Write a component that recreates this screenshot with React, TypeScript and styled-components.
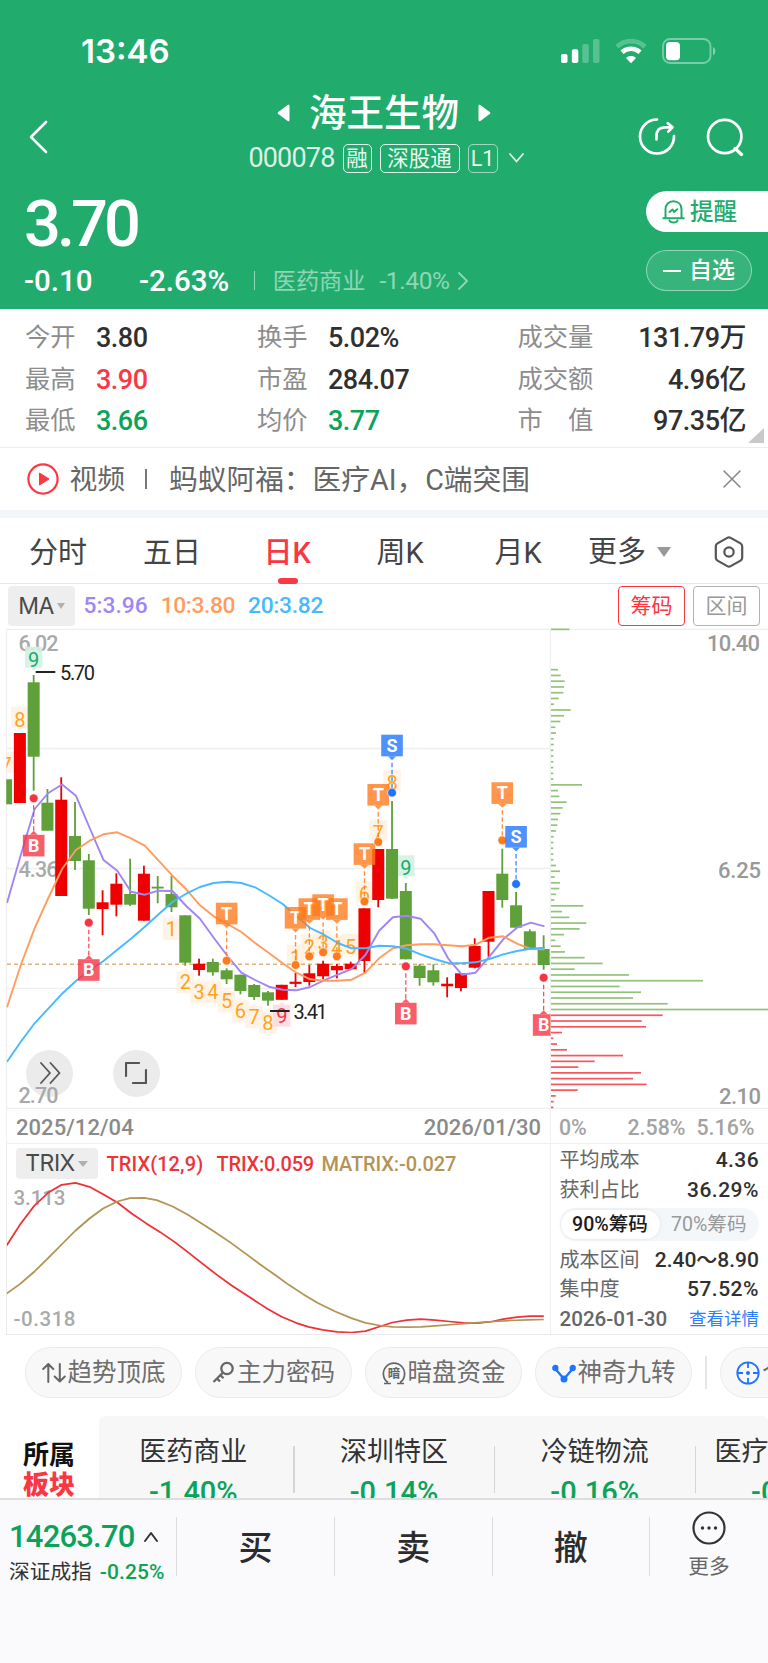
import React from "react";
import styled, { createGlobalStyle } from "styled-components";

const FONT = 'Roboto, "Noto Sans CJK SC", sans-serif';
const GREEN = "#21ac6e";
const UP = "#f93843";
const DOWN = "#0ba35a";

const Global = createGlobalStyle`
  * { box-sizing: border-box; }
  body { margin: 0; background: #fff; font-family: ${FONT}; color: #333; }
  svg { display: block; flex: none; }
`;

const Page = styled.div`
  width: 768px;
  height: 1663px;
  overflow: hidden;
  display: flex;
  flex-direction: column;
  background: #fff;
`;

const Txt = styled.span<{ $s: number; $w?: number; $c?: string; $ls?: number; $box?: number; $m?: string }>`
  font-size: ${(p) => p.$s}px;
  font-weight: ${(p) => p.$w ?? 400};
  color: ${(p) => p.$c ?? "inherit"};
  letter-spacing: ${(p) => p.$ls ?? 0}px;
  width: ${(p) => (p.$box ? `${p.$box}px` : "auto")};
  margin: ${(p) => p.$m ?? 0};
  white-space: nowrap;
`;

/* ---------- header ---------- */
const Header = styled.header`
  height: 309px;
  flex: none;
  background: ${GREEN};
  color: #fff;
`;
const StatusBar = styled.div`
  height: 88px;
  padding: 38px 51px 0 81px;
  display: flex;
  justify-content: space-between;
`;
const Clock = styled.span`
  font: 600 33px/27px Inter, sans-serif;
`;
const StatusIcons = styled.div`
  display: flex;
  gap: 15px;
`;
const NavBar = styled.div`
  height: 90px;
  display: flex;
  justify-content: space-between;
`;
const NavSide = styled.div<{ $right?: boolean }>`
  width: 160px;
  padding: ${(p) => (p.$right ? "7px 24px 0 0" : "7px 0 0 29px")};
  display: flex;
  align-items: center;
  justify-content: ${(p) => (p.$right ? "flex-end" : "flex-start")};
  gap: 30px;
`;
const TitleBlock = styled.div`
  display: flex;
  flex-direction: column;
  align-items: center;
`;
const TitleRow = styled.div`
  margin-top: 5px;
  height: 40px;
  display: flex;
  align-items: center;
  gap: 19px;
  font-size: 37.5px;
  font-weight: 500;
  line-height: 40px;
`;
const CodeRow = styled.div`
  margin: 10.5px 0 0 5px;
  height: 29px;
  display: flex;
  align-items: center;
  gap: 8px;
  line-height: 31px;
`;
const Tag = styled.span<{ $dim?: boolean; $w: number }>`
  width: ${(p) => p.$w}px;
  height: 29px;
  border: 1.5px solid rgba(255, 255, 255, ${(p) => (p.$dim ? 0.55 : 0.85)});
  border-radius: 5px;
  font-size: 21.5px;
  line-height: 28px;
  text-align: center;
  color: rgba(255, 255, 255, 0.92);
`;
const QuoteRow = styled.div`
  display: flex;
  justify-content: space-between;
`;
const QuoteLeft = styled.div`
  padding: 16px 0 0 24px;
`;
const BigPrice = styled.div`
  font-size: 65px;
  font-weight: 500;
  line-height: 60px;
  letter-spacing: -4px;
`;
const ChangeRow = styled.div`
  margin-top: 11.5px;
  height: 30px;
  display: flex;
  align-items: center;
  line-height: 30px;
`;
const HeadDivider = styled.i`
  width: 1.5px;
  height: 19px;
  margin: 0 17.5px 0 24.5px;
  background: rgba(255, 255, 255, 0.5);
`;
const QuoteActions = styled.div`
  width: 122px;
  padding-top: 13px;
  display: flex;
  flex-direction: column;
  gap: 18px;
`;
const Remind = styled.button`
  height: 41px;
  border: 0;
  padding: 1px 0 0 16px;
  border-radius: 21px 0 0 21px;
  background: #fff;
  color: ${GREEN};
  display: flex;
  align-items: center;
  gap: 5px;
  font: 500 23.5px/41px ${FONT};
`;
const Favorite = styled.button`
  width: 106px;
  height: 41px;
  padding: 1px 0 0 16px;
  border: 1.5px solid rgba(255, 255, 255, 0.45);
  border-radius: 21px;
  background: rgba(255, 255, 255, 0.1);
  color: #fff;
  display: flex;
  align-items: center;
  gap: 8px;
  font: 500 23px/38px ${FONT};
  &::before {
    content: "";
    width: 18px;
    height: 2px;
    background: #fff;
  }
`;

/* ---------- stats ---------- */
const Stats = styled.section`
  position: relative;
  height: 139px;
  flex: none;
  padding: 9px 22px 0 25px;
  border-bottom: 1.5px solid #ececec;
  display: grid;
  grid-template-columns: 232px 260.5px 1fr;
  grid-auto-rows: 41.4px;
`;
const Stat = styled.div`
  display: flex;
  align-items: center;
  line-height: 41px;
  &:nth-child(3n) {
    justify-content: space-between;
  }
`;
const StatLabel = styled.span`
  width: 71px;
  margin-bottom: 2px;
  font-size: 25.3px;
  color: #8d8d8d;
  white-space: pre;
`;
const Fold = styled.i`
  position: absolute;
  right: 4px;
  bottom: 4px;
  border-left: 16px solid transparent;
  border-bottom: 15px solid #c9c9c9;
`;

/* ---------- news + tabs ---------- */
const News = styled.section`
  height: 62px;
  flex: none;
  padding: 0 26px 0 27px;
  display: flex;
  align-items: center;
  color: #666;
  font-size: 28.7px;
  line-height: 62px;
  white-space: pre;
`;
const NewsKind = styled.span`
  margin: 2px 0 0 10.5px;
  font-size: 27.8px;
`;
const NewsBar = styled.i`
  width: 2px;
  height: 20px;
  margin: 0 22px 0 20px;
  background: #777;
`;
const NewsTitle = styled.span`
  flex: 1;
  margin-top: 2px;
`;
const Tabs = styled.nav`
  height: 74px;
  flex: none;
  border-top: 8px solid #f2f5f9;
  border-bottom: 1.5px solid #e6e6e6;
  padding: 0 24px 0 29px;
  display: grid;
  grid-template-columns: 114px 120.5px 113px 118px 93.5px 1fr auto;
  align-items: center;
  font-size: 29px;
  line-height: 68px;
  color: #444;
`;
const Tab = styled.div<{ $on?: boolean }>`
  height: 66px;
  display: flex;
  flex-direction: column;
  align-items: flex-start;
  color: ${(p) => (p.$on ? UP : "#444")};
  font-weight: ${(p) => (p.$on ? 500 : 400)};
  &::after {
    content: "";
    width: 20px;
    height: 6px;
    margin: -9px 0 0 14px;
    border-radius: 3px;
    background: ${(p) => (p.$on ? UP : "transparent")};
  }
`;
const MoreTab = styled.div`
  display: flex;
  align-items: center;
  gap: 11px;
`;
const Caret = styled.i<{ $w: number; $h: number; $c?: string }>`
  border: ${(p) => p.$w / 2}px solid transparent;
  border-bottom: 0;
  border-top: ${(p) => p.$h}px solid ${(p) => p.$c ?? "#b0b0b0"};
`;
const MaRow = styled.div`
  height: 44px;
  flex: none;
  padding: 2px 8px;
  display: flex;
  align-items: center;
  line-height: 42px;
`;
const IndexButton = styled.button<{ $w: number; $h: number }>`
  width: ${(p) => p.$w}px;
  height: ${(p) => p.$h}px;
  border: 0;
  padding: 0;
  border-radius: 4px;
  background: #eee;
  color: #4a4a4a;
  font: 400 23px/${(p) => p.$h}px Inter, sans-serif;
  display: flex;
  align-items: center;
  justify-content: center;
  gap: 3px;
  letter-spacing: -0.5px;
`;
const MaValues = styled.div`
  flex: 1;
  padding-left: 8.5px;
  display: flex;
  gap: 13px;
`;
const Outline = styled.button<{ $c: string; $t: string }>`
  width: 67px;
  height: 40px;
  margin-left: 8px;
  padding: 0;
  border: 1.5px solid ${(p) => p.$c};
  border-radius: 4px;
  background: #fff;
  color: ${(p) => p.$t};
  font: 400 21px/38px ${FONT};
`;

/* ---------- chart ---------- */
const ChartGrid = styled.section`
  position: relative;
  flex: none;
  height: 481px;
  display: grid;
  grid-template-columns: 551px 217px;
  & > svg {
    position: relative;
    z-index: 1;
    pointer-events: none;
  }
`;
const RoundButton = styled.button<{ $x: number }>`
  position: absolute;
  left: ${(p) => p.$x}px;
  bottom: 12.5px;
  width: 47px;
  height: 47px;
  border: 0;
  padding: 0;
  border-radius: 50%;
  background: #ebebeb;
  display: flex;
  align-items: center;
  justify-content: center;
`;
const AxisRow = styled.div`
  flex: none;
  height: 35px;
  display: grid;
  grid-template-columns: 544px 1fr;
  margin-left: 6px;
  border: 1.5px solid #efefef;
  border-width: 0 0 1.5px 1.5px;
  line-height: 37px;
`;
const AxisCell = styled.div<{ $share?: boolean }>`
  display: flex;
  justify-content: ${(p) => (p.$share ? "flex-start" : "space-between")};
  padding: 0 9px 0 ${(p) => (p.$share ? 8 : 9)}px;
  border-right: ${(p) => (p.$share ? 0 : 1.5)}px solid #efefef;
  color: ${(p) => (p.$share ? "#a3a3a3" : "#8a8a8a")};
`;
const SubRow = styled.section`
  flex: none;
  height: 191px;
  margin-left: 6px;
  border: 1.5px solid #e9e9e9;
  border-width: 0 0 1.5px 1.5px;
  display: grid;
  grid-template-columns: 544px 1fr;
`;
const TrixPanel = styled.div`
  border-right: 1.5px solid #efefef;
  padding-top: 4px;
`;
const TrixHead = styled.div`
  height: 31px;
  padding-left: 8.5px;
  display: flex;
  align-items: center;
  line-height: 31px;
`;
const TrixValues = styled.div`
  display: flex;
  padding: 2px 0 0 9px;
`;
const ChipPanel = styled.div`
  padding: 0 9px 0 8.5px;
  color: #666;
`;
const ChipLine = styled.div<{ $h: number }>`
  height: ${(p) => p.$h}px;
  line-height: ${(p) => p.$h}px;
  display: flex;
  justify-content: space-between;
  font-size: 20px;
`;
const Toggle = styled.div`
  height: 33px;
  margin: 4px 0 5px;
  padding: 2px 1px;
  border-radius: 17px;
  background: #f3f7fa;
  display: grid;
  grid-template-columns: 99px 1fr;
  text-align: center;
  font-size: 19.6px;
  line-height: 29px;
  color: #999;
`;
const Thumb = styled.span`
  border-radius: 15px;
  background: #fff;
  box-shadow: 0 0 4px rgba(0, 0, 0, 0.08);
  color: #1c1c1c;
  font-weight: 500;
`;

/* ---------- tools ---------- */
const Tools = styled.section`
  flex: none;
  height: 81px;
  padding: 12px 0 0 25px;
  display: flex;
  gap: 13px;
  overflow: hidden;
`;
const Tool = styled.button`
  flex: none;
  width: 157px;
  height: 51px;
  padding: 0;
  border: 1.5px solid #ebebeb;
  border-radius: 26px;
  background: #f8f8f8;
  color: #6e6e6e;
  font: 400 24.5px/48px ${FONT};
  display: flex;
  align-items: center;
  justify-content: center;
  gap: 2px;
  white-space: nowrap;
`;
const ToolDivider = styled.i`
  flex: none;
  width: 1.5px;
  height: 33px;
  margin: 9px 0 0 0;
  background: #e6e6e6;
`;

/* ---------- sectors ---------- */
const Sectors = styled.section`
  flex: none;
  height: 82px;
  display: flex;
  overflow: hidden;
`;
const SectorTitle = styled.div`
  width: 99px;
  padding: 23.5px 0 0 23px;
  font-size: 26px;
  font-weight: 700;
  line-height: 30.7px;
  color: #111;
  b {
    display: block;
    color: ${UP};
  }
`;
const SectorList = styled.div`
  flex: none;
  width: 669px;
  overflow: hidden;
  display: flex;
  background: #f7f7f7;
  border-radius: 6px 6px 0 0;
`;
const Sector = styled.div`
  flex: none;
  width: 200.7px;
  position: relative;
  padding-top: 20px;
  display: flex;
  flex-direction: column;
  align-items: center;
  line-height: 32px;
  &:first-child {
    margin-left: -6px;
  }
  &:not(:last-child)::after {
    content: "";
    position: absolute;
    right: -1px;
    top: 30px;
    width: 1.5px;
    height: 47px;
    background: #d5d5d5;
  }
`;
const SectorPct = styled.span`
  margin-top: 7px;
  font-size: 29px;
  font-weight: 500;
  line-height: 34px;
  color: ${DOWN};
`;

/* ---------- bottom bar ---------- */
const BottomBar = styled.footer`
  flex: 1;
  border-top: 2px solid #dedee0;
  background: #fafafc;
  display: grid;
  grid-template-columns: 176px 158px 157.5px 157.5px 1fr;
`;
const IndexCell = styled.div`
  padding: 18px 0 0 9px;
`;
const IndexLine = styled.div<{ $h: number }>`
  height: ${(p) => p.$h}px;
  line-height: ${(p) => p.$h}px;
  display: flex;
  align-items: center;
  gap: 8px;
`;
const Trade = styled.div`
  height: 59px;
  margin-top: 17px;
  border-left: 1.5px solid #dcdcde;
  text-align: center;
  font-size: 34px;
  font-weight: 500;
  line-height: 63px;
  color: #2c2c2c;
`;
const MoreCell = styled.div`
  height: 59px;
  margin-top: 17px;
  border-left: 1.5px solid #dcdcde;
  display: flex;
  flex-direction: column;
  align-items: center;
  font-size: 20.7px;
  line-height: 32px;
  color: #666;
  svg {
    margin-top: -6px;
    margin-bottom: 6px;
  }
`;

/* ---------- chart data ---------- */
const cx = (i: number) => 6.1 + 13.783 * i;
const RED = "#ee0000";
const GRN = "#5fa03a";

// [up, bodyTop, bodyBottom, wickTop, wickBottom]
const CANDLES: [number, number, number, number, number][] = [
  [0, 779.3, 804.3, 779.3, 804.3], [1, 733, 803, 733, 803], [0, 682.3, 756.7, 675, 790.7],
  [0, 802.7, 830.7, 789, 830.7], [1, 799.7, 896, 777.3, 896], [0, 836, 861, 802, 870],
  [0, 860.3, 908.7, 854, 915], [1, 902.3, 909, 890.3, 935.3], [1, 883.7, 904.7, 873.3, 916.3],
  [0, 894, 904.7, 858.7, 906], [1, 873.7, 920.7, 865.7, 920.7], [0, 886.7, 888.5, 876, 903.3],
  [0, 894, 907.3, 875.7, 912], [0, 915.3, 962.7, 915.3, 965.7], [1, 963.7, 970, 958.7, 975.7],
  [0, 962, 972.3, 958.7, 975.7], [0, 970.3, 979.3, 968.3, 984], [0, 974.7, 991, 974.7, 994.3],
  [0, 985, 997, 984, 1000], [0, 992.3, 1000.7, 991, 1005.7], [1, 984.8, 999.8, 984.8, 999.8],
  [1, 981.7, 983.9, 973, 987], [1, 973.3, 982, 965, 985.7], [1, 963.7, 976.3, 960.7, 979.3],
  [1, 966, 970.3, 964, 978.3], [1, 963.7, 969.3, 961.7, 970], [1, 908.3, 961, 908.3, 973.3],
  [1, 849, 900, 849, 907.3], [0, 849, 898.7, 801, 899], [0, 891, 959.3, 883, 959.3],
  [0, 965.7, 978, 964, 985.7], [0, 970.3, 982.3, 964.3, 985.7], [1, 983.7, 986.3, 977.3, 997.3],
  [1, 973.3, 988, 973.3, 991.3], [1, 946, 967.7, 938.3, 968.3], [1, 891, 941.7, 891, 956.7],
  [0, 873.7, 900, 848.7, 907.7], [0, 905.3, 927.7, 892, 927.7], [0, 931.3, 949.3, 929.3, 949.3],
  [0, 949, 965, 935.3, 969.7],
];
const MA5 = [903, 855, 809, 793, 784.5, 795.7, 828, 860, 870.7, 891.7, 894.7, 890.7, 891, 906, 918.7, 937.7, 956, 972.7, 980, 986.7, 989.7, 990.3, 987, 980.3, 974.7, 969, 955, 930.7, 917.3, 915.7, 918.7, 933.3, 958.3, 974.7, 972.7, 956.7, 939.3, 927.7, 922.7, 926.3];
const MA10 = [1007.3, 965, 928.3, 898, 869, 850, 840.7, 834.3, 832.3, 838.3, 845.7, 860.7, 875.7, 889.3, 905.3, 916.3, 924, 932, 943, 953, 963.3, 972.7, 979.3, 980.7, 980.7, 979.7, 972.7, 958.3, 948.3, 945.3, 944.3, 944.3, 945.3, 946.3, 944.7, 937.7, 936.3, 943.7, 949, 949.3];
const MA20 = [1061.7, 1041.7, 1023.3, 1008.7, 993.7, 981, 970.3, 961, 949.7, 938.7, 926.7, 914.3, 902, 893.7, 887, 883, 881.7, 883, 887.3, 895.3, 904, 916, 928, 934.7, 943, 948.3, 948.3, 945.7, 946.3, 948.7, 954.3, 959, 963, 963.3, 962.3, 959, 954.3, 951, 948.7, 947.7];
const line = (a: number[]) => a.map((y, i) => `${(cx(i) + 0.9).toFixed(1)},${y}`).join(" ");

// [index, digit, centre y, below]
const COUNTS: [number, string, number, number][] = [
  [0, "7", 764.7, 0], [1, "8", 719.7, 0], [2, "9", 659.7, 0],
  [12, "1", 929.3, 1], [13, "2", 982.3, 1], [14, "3", 992.3, 1], [15, "4", 992.3, 1],
  [16, "5", 1001.3, 1], [17, "6", 1011.3, 1], [18, "7", 1017, 1], [19, "8", 1022.7, 1], [20, "9", 1015.7, 1],
  [21, "1", 957.7, 0], [22, "2", 947.3, 0], [23, "3", 943.3, 0], [24, "4", 948.3, 0], [25, "5", 946.7, 0],
  [26, "6", 894.3, 0], [27, "7", 833.3, 0], [28, "8", 783.3, 0], [29, "9", 868.3, 0],
];
// [index, kind, dot y]
const SIGNALS: [number, "B" | "S" | "T", number][] = [
  [2, "B", 798.3], [6, "B", 922.7], [29, "B", 966.3], [39, "B", 977.7],
  [16, "T", 960.7], [21, "T", 965], [22, "T", 956.3], [24, "T", 956.3], [23, "T", 952.3],
  [26, "T", 901.3], [27, "T", 842], [36, "T", 840.3], [28, "S", 792.7], [37, "S", 884],
];
const SIG = { B: "#f73341", S: "#1f74ff", T: "#ff7a1c" };

const PROFILE = [
  88, 0, 0, 0, 0, 0, 0, 54, 62, 74, 72, 70, 56, 42, 92, 72, 61, 46, 48, 41, 41, 40, 40, 40, 40, 40, 40, 126, 54, 58,
  80, 68, 61, 54, 52, 48, 41, 40, 40, 40, 40, 48, 60, 44, 60, 58, 48, 43, 130, 66, 88, 139, 119, 72, 46, 62, 75, 134,
  188, 104, 267, 489, 239, 303, 279, 383, 690, 368, 305, 318, 66, 40, 51, 81, 249, 164, 115, 303, 279, 320, 113, 47, 41, 40,
];

const TRIX_LINE = "20,408 57,346 98,288 136,250 174,226 213,220 252,232 290,254 330,279 370,312 410,341 450,368 490,397 530,430 570,464 610,497 650,528 690,556 730,584 750,598 790,622 830,640 865,652 905,661 945,667 985,669 1025,665 1065,651 1100,639 1140,632 1180,629 1220,632 1260,636 1300,640 1340,641 1380,636 1410,629 1450,623 1485,620 1524,620";
const MATRIX_LINE = "20,552 57,524 98,486 136,446 174,405 213,363 252,327 290,297 330,276 365,266 405,265 440,272 485,291 525,314 565,341 605,369 645,398 690,433 730,465 770,495 810,526 850,554 890,580 940,606 985,626 1025,640 1065,648 1100,652 1140,653 1180,652 1220,649 1270,645 1320,641 1380,636 1430,633 1480,631 1524,630";

function Count({ d }: { d: [number, string, number, number] }) {
  const [i, n, y, below] = d;
  const x = cx(i);
  const nine = n === "9";
  const bg = nine ? (below ? "#fcdcdf" : "#d5f1e4") : "#fff2e4";
  const fg = nine ? (below ? "#f5364a" : "#14ad68") : "#ffa31f";
  const top = below ? y - 11 : y - 13;
  const tip = below ? `${x - 3},${top} ${x},${top - 3} ${x + 3},${top}` : `${x - 3},${top + 21} ${x},${top + 24} ${x + 3},${top + 21}`;
  return (
    <g>
      <g fill={bg} opacity={0.9}>
        <rect x={x - 8.7} y={top} width={17.4} height={below ? 22 : 21} />
        <polygon points={tip} />
      </g>
      <text x={x} y={y + 7.1} textAnchor="middle" fontSize={20} fill={fg}>{n}</text>
    </g>
  );
}

function Signal({ d }: { d: [number, "B" | "S" | "T", number] }) {
  const [i, k, y] = d;
  const x = cx(i);
  const c = SIG[k];
  const low = k === "B";
  const top = low ? y + 36.5 : y - 58;
  const tip = low ? `${x - 4},${top} ${x},${top - 4} ${x + 4},${top}` : `${x - 4},${top + 21.6} ${x},${top + 25.5} ${x + 4},${top + 21.6}`;
  return (
    <g>
      <line x1={x} x2={x} y1={low ? y + 7 : top + 28} y2={low ? top - 4 : y - 4} stroke={c} strokeWidth={1.3} strokeDasharray="4.5 2.5" opacity={0.85} />
      <circle cx={x} cy={y} r={4.4} fill={c} stroke="#fff" strokeWidth={0.6} />
      <g fill={c} opacity={0.79}>
        <rect x={x - 10.8} y={top} width={21.6} height={21.6} />
        <polygon points={tip} />
      </g>
      <text x={x} y={top + 17} textAnchor="middle" fontSize={18} fontWeight={700} fill="#fff" fontFamily="Roboto">{k}</text>
    </g>
  );
}

function CandleChart() {
  return (
    <svg width={551} height={481} viewBox="0 628 551 481" fontFamily="Roboto">
      <g stroke="#efefef" strokeWidth={1.3}>
        {[629.3, 748.5, 868.5, 988.4, 1108.4].map((y) => <line key={y} x1={6} x2={551} y1={y} y2={y} />)}
        <line x1={6.5} x2={6.5} y1={629} y2={1109} />
        <line x1={550.4} x2={550.4} y1={629} y2={1109} />
      </g>
      <g fill="#a9a9a9" fontSize={21.5} fontWeight={500}>
        <text x={18.5} y={650.8} textLength={40}>6.02</text>
        <text x={18.5} y={876.8} textLength={40}>4.36</text>
        <text x={18.5} y={1103.3} textLength={40}>2.70</text>
      </g>
      <clipPath id="plot"><rect x={6.5} y={628} width={544} height={481} /></clipPath>
      <g clipPath="url(#plot)">
        {COUNTS.map((d, k) => <Count key={k} d={d} />)}
        <line x1={7} x2={550} y1={964.2} y2={964.2} stroke="#d9b380" strokeWidth={1.6} strokeDasharray="4 3" />
        {CANDLES.map(([up, t, b, wt, wb], i) => (
          <g key={i} fill={up ? RED : GRN}>
            <rect x={cx(i) - 6} y={t} width={12} height={b - t} />
            <rect x={cx(i) - 0.9} y={wt} width={1.8} height={wb - wt} />
          </g>
        ))}
        <g fill="none" strokeWidth={1.9} strokeLinejoin="round">
          <polyline points={line(MA5)} stroke="#a085f5" />
          <polyline points={line(MA10)} stroke="#ff9c5e" />
          <polyline points={line(MA20)} stroke="#47b9ff" />
        </g>
        {SIGNALS.map((d, k) => <Signal key={k} d={d} />)}
      </g>
      <g fill="#222" fontSize={20}>
        <rect x={35.7} y={671} width={19.6} height={2} />
        <text x={60} y={679.8} textLength={35}>5.70</text>
        <rect x={270} y={1010} width={19.6} height={2} />
        <text x={293.5} y={1019.2} textLength={34}>3.41</text>
      </g>
    </svg>
  );
}

function ProfileChart() {
  return (
    <svg width={217} height={481} viewBox="551 628 217 481" fontFamily="Roboto">
      <line x1={551} x2={768} y1={629.3} y2={629.3} stroke="#efefef" strokeWidth={1.3} />
      <line x1={551} x2={768} y1={1108.4} y2={1108.4} stroke="#efefef" strokeWidth={1.3} />
      {PROFILE.map((v, n) =>
        v ? <rect key={n} x={551} y={628.5 + n * 5.76} width={(v - 33) / 3} height={1.7} fill={n > 66 ? "#f9555c" : "#93c27a"} /> : null
      )}
      <g fill="#999" fontSize={22} fontWeight={500}>
        <text x={707} y={651.2} textLength={53}>10.40</text>
        <text x={718} y={877.6} textLength={43}>6.25</text>
        <text x={719} y={1104} textLength={42}>2.10</text>
      </g>
    </svg>
  );
}

function TrixChart() {
  return (
    <svg width={542} height={154} viewBox="7.5 1179.5 542 154" fontFamily="Roboto">
      <g fill="#a9a9a9" fontSize={20.5} fontWeight={500}>
        <text x={14} y={1205.3} textLength={52}>3.113</text>
        <text x={14} y={1326.5} textLength={62}>-0.318</text>
      </g>
      <g transform="translate(0 1110) scale(0.35714 0.33333)" fill="none" strokeWidth={5.2} strokeLinejoin="round">
        <polyline points={TRIX_LINE} stroke="#ee3338" />
        <polyline points={MATRIX_LINE} stroke="#b39456" />
      </g>
    </svg>
  );
}

/* ---------- icons ---------- */
const SignalIcon = () => (
  <svg width={39} height={27} viewBox="0 0 39 27" fill="#fff">
    <rect x={0} y={16} width={6.5} height={9} rx={1.8} />
    <rect x={10.8} y={11.3} width={6.5} height={13.7} rx={1.8} />
    <rect x={21.3} y={6} width={6.5} height={19} rx={1.8} opacity={0.25} />
    <rect x={32} y={1} width={6.5} height={24} rx={1.8} opacity={0.25} />
  </svg>
);
const WifiIcon = () => (
  <svg width={32} height={27} viewBox="0 0 32 27" fill="none">
    <path d="M2 8.700C10 1.200 22 1.200 30 8.700" stroke="#fff" strokeWidth={4.6} opacity={0.25} />
    <path d="M7 14.200C12.200 9.500 19.800 9.500 25 14.200" stroke="#fff" strokeWidth={4.6} />
    <path d="M16 25.300l-5-5.400c2.800-2.600 7.200-2.600 10 0z" fill="#fff" />
  </svg>
);
const BatteryIcon = () => (
  <svg width={55} height={27} viewBox="0 0 55 27" fill="none">
    <rect x={1} y={1} width={47.5} height={24} rx={7} stroke="#fff" strokeWidth={1.8} opacity={0.4} />
    <rect x={4} y={4} width={14} height={18.3} rx={4} fill="#fff" />
    <path d="M51 9c3 1.200 3 7 0 8.200z" fill="#fff" opacity={0.45} />
  </svg>
);
const BackIcon = () => (
  <svg width={19} height={34} viewBox="0 0 19 34" fill="none" stroke="#fff" strokeWidth={2.6} strokeLinecap="round" strokeLinejoin="round">
    <path d="M17 2L2 17l15 15" />
  </svg>
);
const ShareIcon = () => (
  <svg width={38} height={38} viewBox="0 0 38 38" fill="none" stroke="#fff" strokeWidth={2.7} strokeLinecap="round" strokeLinejoin="round">
    <path d="M19 1.500A17 17 0 1 0 36 18" />
    <path d="M18.500 21.500V18C18.500 12 22 9.300 27 9.300H34M29.800 5.200l4.700 4-4.300 4.400" />
  </svg>
);
const SearchIcon = () => (
  <svg width={38} height={38} viewBox="0 0 38 38" fill="none" stroke="#fff" strokeWidth={2.7} strokeLinecap="round">
    <circle cx={18.7} cy={18.5} r={16.7} />
    <path d="M29 30.500l6.500 6" strokeWidth={3.2} />
  </svg>
);
const TitleArrow = styled.svg<{ $flip?: boolean }>`
  transform: ${(p) => (p.$flip ? "scaleX(-1)" : "none")};
`;
const Arrow = ({ flip }: { flip?: boolean }) => (
  <TitleArrow $flip={flip} width={13} height={18} viewBox="0 0 13 18" fill="#fff">
    <path d="M11 .8Q12.500 .2 12.500 2V16q0 1.800-1.500 1.200L1 9.800Q0 9 1 8.200z" />
  </TitleArrow>
);
const Bell = () => (
  <svg width={23} height={24} viewBox="0 0 23 24" fill="none" stroke={GREEN} strokeWidth={2} strokeLinecap="round" strokeLinejoin="round">
    <path d="M3.500 18V9.500C3.500 4.500 6.800 1.300 11.500 1.300s8 3.200 8 8.200V18M1.300 18.300h20.400M7.500 20.500c1 2.800 7 2.800 8 0M7.500 12l3-2.500 1.600 2.500 3.200-2.800" />
  </svg>
);
const PlayIcon = () => (
  <svg width={32} height={32} viewBox="0 0 32 32">
    <circle cx={16} cy={16} r={14.6} fill="none" stroke={UP} strokeWidth={2.2} />
    <path d="M12.500 10v12l9.500-6z" fill={UP} stroke={UP} strokeLinejoin="round" />
  </svg>
);
const Chevron = ({ d, w, h, c, s = 1.8 }: { d: string; w: number; h: number; c: string; s?: number }) => (
  <svg width={w} height={h} viewBox={`0 0 ${w} ${h}`} fill="none" stroke={c} strokeWidth={s} strokeLinecap="round" strokeLinejoin="round">
    <path d={d} />
  </svg>
);
const HexIcon = () => (
  <svg width={30} height={32} viewBox="0 0 30 32" fill="none" stroke="#555" strokeWidth={2.2} strokeLinejoin="round">
    <path d="M13.300 1.900q1.700-.9 3.400 0l9.800 5.500q1.700 1 1.700 2.900v11.400q0 1.900-1.700 2.900l-9.800 5.500q-1.700.9-3.400 0l-9.800-5.500q-1.700-1-1.700-2.900V10.300q0-1.900 1.700-2.900z" />
    <circle cx={15} cy={16} r={4.7} />
  </svg>
);
const TrendArrows = () => (
  <svg width={24} height={22} viewBox="0 0 24 22" fill="none" stroke="#666" strokeWidth={2} strokeLinecap="round" strokeLinejoin="round">
    <path d="M6.300 20V2M1.200 7l5.100-5L11.300 7M17.800 2v17.500M12.700 14.500l5.100 5 5-5" />
  </svg>
);
const KeyIcon = () => (
  <svg width={23} height={23} viewBox="0 0 23 23" fill="none" stroke="#666" strokeWidth={2.3}>
    <circle cx={15} cy={7.5} r={5.7} />
    <path d="M11 11.500L1.500 21M4.500 17l3.500 3.500M8 13.800l3.500 3.500" />
  </svg>
);
const DarkIcon = () => (
  <svg width={24} height={24} viewBox="0 0 24 24" fill="none" stroke="#666" strokeWidth={1.7}>
    <path d="M6 21.500A10.600 10.600 0 1 1 18 21.500M2 22.500h7M15 22.500h7" />
    <text x={12} y={16.5} textAnchor="middle" fontSize={12.5} fontWeight={700} fill="#666" stroke="none" fontFamily="Noto Sans CJK SC">暗</text>
  </svg>
);
const NineIcon = () => (
  <svg width={24} height={20} viewBox="0 0 24 20" fill="#1f74ff" stroke="#1f74ff" strokeWidth={2.4}>
    <path d="M3.500 6l8.500 10 8.500-10" fill="none" />
    <circle cx={3.3} cy={5} r={2} /><circle cx={20.7} cy={5} r={2} /><circle cx={12} cy={16} r={2.3} />
  </svg>
);
const TargetIcon = () => (
  <svg width={24} height={24} viewBox="0 0 24 24" fill="none" stroke="#1f74ff" strokeWidth={1.8}>
    <circle cx={12} cy={12} r={10.7} />
    <path d="M12 1v6M12 17v6M1 12h6M17 12h6" />
    <circle cx={12} cy={12} r={2} fill="#1f74ff" stroke="none" />
  </svg>
);

const STATS: [string, string, string?][] = [
  ["今开", "3.80"], ["换手", "5.02%"], ["成交量", "131.79万"],
  ["最高", "3.90", UP], ["市盈", "284.07"], ["成交额", "4.96亿"],
  ["最低", "3.66", DOWN], ["均价", "3.77", DOWN], ["市\u3000值", "97.35亿"],
];
const SECTORS = [["医药商业", "-1.40%"], ["深圳特区", "-0.14%"], ["冷链物流", "-0.16%"], ["医疗器械概念", "-0.62%"]];

export default function App() {
  return (
    <Page>
      <Global />
      <Header>
        <StatusBar>
          <Clock>13:46</Clock>
          <StatusIcons><SignalIcon /><WifiIcon /><BatteryIcon /></StatusIcons>
        </StatusBar>
        <NavBar>
          <NavSide><BackIcon /></NavSide>
          <TitleBlock>
            <TitleRow><Arrow /><span>海王生物</span><Arrow flip /></TitleRow>
            <CodeRow>
              <Txt $s={27} $ls={-0.8} $c="rgba(255,255,255,.85)">000078</Txt>
              <Tag $w={29}>融</Tag><Tag $w={80}>深股通</Tag><Tag $w={30} $dim>L1</Tag>
              <Chevron w={19} h={12} d="M4 2l6.500 7.500L17 2" c="rgba(255,255,255,.85)" />
            </CodeRow>
          </TitleBlock>
          <NavSide $right><ShareIcon /><SearchIcon /></NavSide>
        </NavBar>
        <QuoteRow>
          <QuoteLeft>
            <BigPrice>3.70</BigPrice>
            <ChangeRow>
              <Txt $s={29.5} $w={500} $box={115}>-0.10</Txt>
              <Txt $s={29.5} $w={500}>-2.63%</Txt>
              <HeadDivider />
              <Txt $s={23.2} $c="rgba(255,255,255,.5)">医药商业</Txt>
              <Txt $s={24.5} $ls={-0.4} $c="rgba(255,255,255,.5)" $m="0 7px 0 14px">-1.40%</Txt>
              <Chevron w={12} h={20} d="M2 2l8 8-8 8" c="rgba(255,255,255,.5)" />
            </ChangeRow>
          </QuoteLeft>
          <QuoteActions>
            <Remind><Bell />提醒</Remind>
            <Favorite>自选</Favorite>
          </QuoteActions>
        </QuoteRow>
      </Header>

      <Stats>
        {STATS.map(([l, v, c]) => (
          <Stat key={l}>
            <StatLabel>{l}</StatLabel>
            <Txt $s={27} $w={500} $ls={-0.5} $c={c ?? "#303030"}>{v}</Txt>
          </Stat>
        ))}
        <Fold />
      </Stats>

      <News>
        <PlayIcon />
        <NewsKind>视频</NewsKind>
        <NewsBar />
        <NewsTitle>蚂蚁阿福：医疗AI，C端突围</NewsTitle>
        <Chevron w={20} h={20} d="M2 2l16 16M18 2L2 18" c="#888" s={1.6} />
      </News>

      <Tabs>
        <Tab>分时</Tab>
        <Tab>五日</Tab>
        <Tab $on>日K</Tab>
        <Tab>周K</Tab>
        <Tab>月K</Tab>
        <MoreTab>更多<Caret $w={14} $h={10} $c="#999" /></MoreTab>
        <HexIcon />
      </Tabs>

      <MaRow>
        <IndexButton $w={67} $h={40}>MA<Caret $w={9} $h={6} /></IndexButton>
        <MaValues>
          <Txt $s={22.8} $w={500} $c="#a085f5">5:3.96</Txt>
          <Txt $s={22.8} $w={500} $c="#ff9c5e" $ls={-0.4}>10:3.80</Txt>
          <Txt $s={22.8} $w={500} $c="#47b9ff" $ls={-0.3}>20:3.82</Txt>
        </MaValues>
        <Outline $c={UP} $t={UP}>筹码</Outline>
        <Outline $c="#b3b3b3" $t="#999">区间</Outline>
      </MaRow>

      <ChartGrid>
        <CandleChart />
        <ProfileChart />
        <RoundButton $x={26}><Chevron w={22} h={22} d="M2 1l9 10-9 10M11.500 1l9 10-9 10" c="#555" /></RoundButton>
        <RoundButton $x={112.5}><Chevron w={22} h={22} d="M1 14V1h13M21 8v13H8" c="#555" s={2.2} /></RoundButton>
      </ChartGrid>
      <AxisRow>
        <AxisCell>
          <Txt $s={22} $w={500} $ls={0.05}>2025/12/04</Txt>
          <Txt $s={22} $w={500}>2026/01/30</Txt>
        </AxisCell>
        <AxisCell $share>
          <Txt $s={21.3} $w={500} $box={68.5}>0%</Txt>
          <Txt $s={21.3} $w={500} $box={69}>2.58%</Txt>
          <Txt $s={21.3} $w={500}>5.16%</Txt>
        </AxisCell>
      </AxisRow>
      <SubRow>
        <TrixPanel>
          <TrixHead>
            <IndexButton $w={82} $h={31}>TRIX<Caret $w={10} $h={6} /></IndexButton>
            <TrixValues>
              <Txt $s={20} $w={500} $c="#ee3338" $ls={0.1} $box={110}>TRIX(12,9)</Txt>
              <Txt $s={20} $w={500} $c="#ee3338" $ls={-0.2} $box={105}>TRIX:0.059</Txt>
              <Txt $s={20} $w={500} $c="#b39456" $ls={-0.1}>MATRIX:-0.027</Txt>
            </TrixValues>
          </TrixHead>
          <TrixChart />
        </TrixPanel>
        <ChipPanel>
          <ChipLine $h={33}>平均成本<Txt $s={21} $w={500} $c="#303030" $ls={0.4}>4.36</Txt></ChipLine>
          <ChipLine $h={27}>获利占比<Txt $s={21} $w={500} $c="#303030" $ls={0.5}>36.29%</Txt></ChipLine>
          <Toggle><Thumb>90%筹码</Thumb><span>70%筹码</span></Toggle>
          <ChipLine $h={29}>成本区间<Txt $s={21} $w={500} $c="#303030">2.40～8.90</Txt></ChipLine>
          <ChipLine $h={29}>集中度<Txt $s={21} $w={500} $c="#303030" $ls={0.5}>57.52%</Txt></ChipLine>
          <ChipLine $h={30}>
            <Txt $s={20.6} $w={500}>2026-01-30</Txt>
            <Txt $s={17.5} $c="#2f7dfb">查看详情</Txt>
          </ChipLine>
        </ChipPanel>
      </SubRow>

      <Tools>
        <Tool><TrendArrows />趋势顶底</Tool>
        <Tool><KeyIcon />主力密码</Tool>
        <Tool><DarkIcon />暗盘资金</Tool>
        <Tool><NineIcon />神奇九转</Tool>
        <ToolDivider />
        <Tool><TargetIcon />个股雷达</Tool>
      </Tools>

      <Sectors>
        <SectorTitle>所属<b>板块</b></SectorTitle>
        <SectorList>
          {SECTORS.map(([n, p]) => (
            <Sector key={n}><Txt $s={27}>{n}</Txt><SectorPct>{p}</SectorPct></Sector>
          ))}
        </SectorList>
      </Sectors>

      <BottomBar>
        <IndexCell>
          <IndexLine $h={37}>
            <Txt $s={31} $c={DOWN} $w={500} $ls={-0.8}>14263.70</Txt>
            <Chevron w={16} h={12} d="M2 10l6-8 6 8" c="#333" s={2} />
          </IndexLine>
          <IndexLine $h={34}>
            <Txt $s={20.7}>深证成指</Txt>
            <Txt $s={21} $w={500} $c={DOWN} $ls={0.1}>-0.25%</Txt>
          </IndexLine>
        </IndexCell>
        <Trade>买</Trade>
        <Trade>卖</Trade>
        <Trade>撤</Trade>
        <MoreCell>
          <svg width={34} height={34} viewBox="0 0 34 34" fill="#333">
            <circle cx={17} cy={17} r={15.5} fill="none" stroke="#333" strokeWidth={2.2} />
            <circle cx={10.5} cy={17} r={1.7} /><circle cx={17} cy={17} r={1.7} /><circle cx={23.5} cy={17} r={1.7} />
          </svg>
          更多
        </MoreCell>
      </BottomBar>
    </Page>
  );
}
